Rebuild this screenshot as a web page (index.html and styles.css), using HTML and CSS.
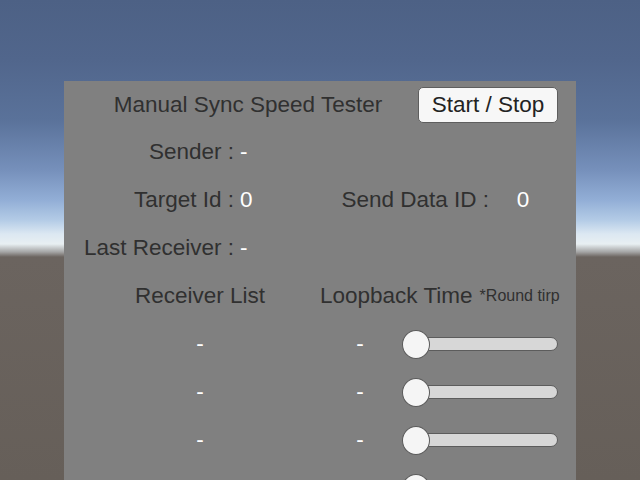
FILE: index.html
```html
<!DOCTYPE html>
<html>
<head>
<meta charset="utf-8">
<title>Manual Sync Speed Tester</title>
<link rel="stylesheet" href="styles.css">
</head>
<body>
<div class="panel">
  <div class="row row-title">
    <span class="title">Manual Sync Speed Tester</span>
    <button class="btn">Start / Stop</button>
  </div>
  <div class="row">
    <span class="label">Sender :</span><span class="value">-</span>
  </div>
  <div class="row">
    <span class="label">Target Id :</span><span class="value v-short">0</span>
    <span class="label label-2">Send Data ID :</span><span class="value v-2">0</span>
  </div>
  <div class="row">
    <span class="label">Last Receiver :</span><span class="value">-</span>
  </div>
  <div class="row">
    <span class="col-name">Receiver List</span>
    <span class="head-right">Loopback Time</span>
    <span class="note">*Round tirp</span>
  </div>
  <div class="row">
    <span class="col-name value">-</span><span class="col-time value">-</span>
    <div class="slider"><div class="track"></div><div class="handle"></div></div>
  </div>
  <div class="row">
    <span class="col-name value">-</span><span class="col-time value">-</span>
    <div class="slider"><div class="track"></div><div class="handle"></div></div>
  </div>
  <div class="row">
    <span class="col-name value">-</span><span class="col-time value">-</span>
    <div class="slider"><div class="track"></div><div class="handle"></div></div>
  </div>
  <div class="row">
    <span class="col-name"></span><span class="col-time"></span>
    <div class="slider"><div class="track"></div><div class="handle"></div></div>
  </div>
</div>
</body>
</html>
```
FILE: styles.css
```css
html, body {
  margin: 0;
  padding: 0;
  width: 640px;
  height: 480px;
  overflow: hidden;
}
body {
  font-family: "Liberation Sans", Arial, sans-serif;
  background: linear-gradient(to bottom,
    #4d6185 0px,
    #51668c 60px,
    #5a729a 120px,
    #7690bb 170px,
    #92aed6 200px,
    #b3cbe6 220px,
    #dce8f2 234px,
    #e8eff2 244px,
    #a4a4a4 252px,
    #6b645f 257px,
    #665f59 480px);
}
.panel {
  margin-left: 64px;
  margin-top: 81px;
  width: 512px;
  height: 399px;
  background: #808080;
  color: #303030;
  font-size: 22.5px;
  overflow: hidden;
}
.row {
  display: flex;
  align-items: center;
  height: 48px;
  flex-shrink: 0;
  white-space: nowrap;
}
.row-title {
  height: 47px;
}
.title {
  margin-left: 34px;
  width: 300px;
  text-align: center;
}
.btn {
  margin-left: 20px;
  width: 140px;
  height: 36px;
  padding: 0;
  font-family: inherit;
  font-size: 22.5px;
  color: #232323;
  background: #f7f7f7;
  border: 1px solid #5e5e5e;
  border-radius: 5px;
}
.label {
  width: 170px;
  text-align: right;
}
.value {
  color: #ffffff;
  margin-left: 6px;
}
.v-short {
  width: 50px;
}
.label-2 {
  width: 199px;
}
.v-2 {
  margin-left: 0;
  width: 68px;
  text-align: center;
}
.col-name {
  margin-left: 16px;
  width: 240px;
  text-align: center;
}
.head-right {
  margin-left: 0;
}
.note {
  margin-left: 7px;
  font-size: 16px;
}
.col-time {
  margin-left: 0;
  width: 80px;
  text-align: center;
}
.slider {
  position: relative;
  margin-left: 2px;
  width: 156px;
  height: 29px;
  flex-shrink: 0;
  display: flex;
  align-items: center;
}
.track {
  margin-left: 14px;
  width: 142px;
  height: 14px;
  box-sizing: border-box;
  background: #d7d7d7;
  border: 1px solid #5c5c5c;
  border-radius: 7px;
}
.handle {
  position: absolute;
  left: 0;
  top: 0;
  width: 28px;
  height: 29px;
  box-sizing: border-box;
  background: #f5f5f5;
  border: 1px solid #5a5a5a;
  border-radius: 50%;
}
```
